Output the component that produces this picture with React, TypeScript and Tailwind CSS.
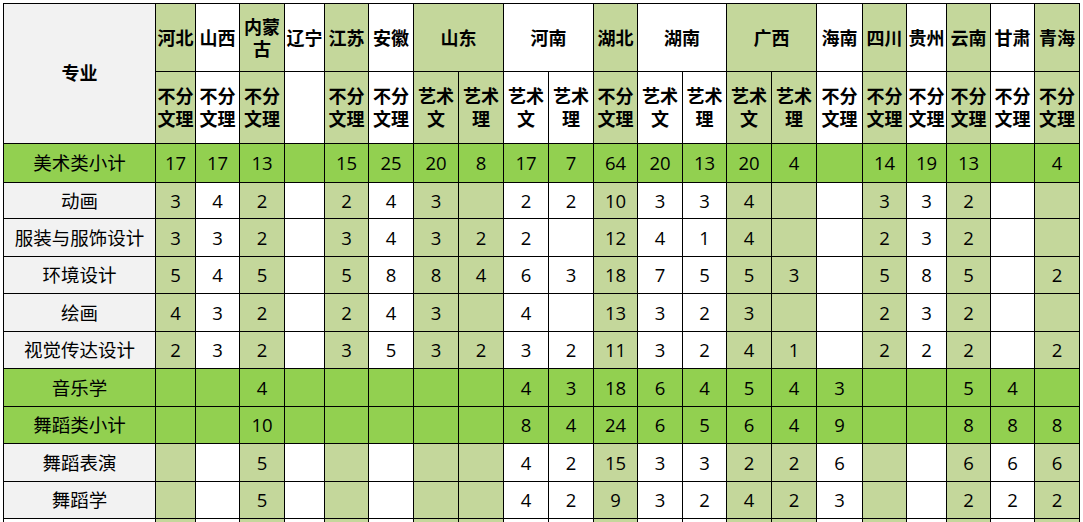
const font = { fontFamily: '"Open Sans", "Noto Sans CJK SC", sans-serif' };

// 每个省份：名称、是否浅绿底色、第二行表头
const provinces = [
  { name: "河北", green: true, subs: ["不分文理"] },
  { name: "山西", green: false, subs: ["不分文理"] },
  { name: "内蒙古", green: true, subs: ["不分文理"] },
  { name: "辽宁", green: false, subs: [""] },
  { name: "江苏", green: true, subs: ["不分文理"] },
  { name: "安徽", green: false, subs: ["不分文理"] },
  { name: "山东", green: true, subs: ["艺术文", "艺术理"] },
  { name: "河南", green: false, subs: ["艺术文", "艺术理"] },
  { name: "湖北", green: true, subs: ["不分文理"] },
  { name: "湖南", green: false, subs: ["艺术文", "艺术理"] },
  { name: "广西", green: true, subs: ["艺术文", "艺术理"] },
  { name: "海南", green: false, subs: ["不分文理"] },
  { name: "四川", green: true, subs: ["不分文理"] },
  { name: "贵州", green: false, subs: ["不分文理"] },
  { name: "云南", green: true, subs: ["不分文理"] },
  { name: "甘肃", green: false, subs: ["不分文理"] },
  { name: "青海", green: true, subs: ["不分文理"] },
];

const widths = [40, 44, 45, 40, 44, 45, 45, 45, 45, 45, 44, 45, 44, 45, 45, 46, 44, 40, 44, 44, 45];
const colGreen = provinces.flatMap((p) => p.subs.map(() => p.green));

const rows: { label: string; total?: boolean; h: number; v: string[] }[] = [
  { label: "美术类小计", total: true, h: 39, v: ["17", "17", "13", "", "15", "25", "20", "8", "17", "7", "64", "20", "13", "20", "4", "", "14", "19", "13", "", "4"] },
  { label: "动画", h: 36, v: ["3", "4", "2", "", "2", "4", "3", "", "2", "2", "10", "3", "3", "4", "", "", "3", "3", "2", "", ""] },
  { label: "服装与服饰设计", h: 38, v: ["3", "3", "2", "", "3", "4", "3", "2", "2", "", "12", "4", "1", "4", "", "", "2", "3", "2", "", ""] },
  { label: "环境设计", h: 37, v: ["5", "4", "5", "", "5", "8", "8", "4", "6", "3", "18", "7", "5", "5", "3", "", "5", "8", "5", "", "2"] },
  { label: "绘画", h: 38, v: ["4", "3", "2", "", "2", "4", "3", "", "4", "", "13", "3", "2", "3", "", "", "2", "3", "2", "", ""] },
  { label: "视觉传达设计", h: 37, v: ["2", "3", "2", "", "3", "5", "3", "2", "3", "2", "11", "3", "2", "4", "1", "", "2", "2", "2", "", "2"] },
  { label: "音乐学", total: true, h: 38, v: ["", "", "4", "", "", "", "", "", "4", "3", "18", "6", "4", "5", "4", "3", "", "", "5", "4", ""] },
  { label: "舞蹈类小计", total: true, h: 37, v: ["", "", "10", "", "", "", "", "", "8", "4", "24", "6", "5", "6", "4", "9", "", "", "8", "8", "8"] },
  { label: "舞蹈表演", h: 38, v: ["", "", "5", "", "", "", "", "", "4", "2", "15", "3", "3", "2", "2", "6", "", "", "6", "6", "6"] },
  { label: "舞蹈学", h: 37, v: ["", "", "5", "", "", "", "", "", "4", "2", "9", "3", "2", "4", "2", "3", "", "", "2", "2", "2"] },
];

function Sub({ text }: { text: string }) {
  if (!text) return null;
  const first = text.slice(0, 2);
  const rest = text.slice(2);
  return (
    <>
      {first}
      <br />
      {rest}
    </>
  );
}

export default function App() {
  return (
    <div className="w-[1083px] h-[522px] overflow-hidden bg-white pl-[3px] pt-[3px]" style={font}>
      <table className="table-fixed border-collapse w-[1077px] text-black">
        <colgroup>
          <col className="w-[152px]" />
          {widths.map((w, i) => (
            <col key={i} style={{ width: w }} />
          ))}
        </colgroup>
        <tbody>
          <tr className="h-[68px]">
            <td rowSpan={2} className="border border-black bg-[#f2f2f2] text-center font-bold text-[18px]">
              专业
            </td>
            {provinces.map((p) => (
              <td
                key={p.name}
                colSpan={p.subs.length}
                className={`border border-black text-center font-bold text-[18px] leading-[22px] px-0 ${p.green ? "bg-[#c4d79b]" : "bg-white"}`}
              >
                {p.name.length > 2 ? (
                  <>
                    {p.name.slice(0, 2)}
                    <br />
                    {p.name.slice(2)}
                  </>
                ) : (
                  p.name
                )}
              </td>
            ))}
          </tr>
          <tr className="h-[72px]">
            {provinces.flatMap((p) =>
              p.subs.map((s, j) => (
                <td
                  key={p.name + j}
                  className={`border border-black text-center font-bold text-[18px] leading-[23px] px-0 ${p.green ? "bg-[#c4d79b]" : "bg-white"}`}
                >
                  <Sub text={s} />
                </td>
              ))
            )}
          </tr>
          {rows.map((r) => (
            <tr key={r.label} style={{ height: r.h }}>
              <td className={`border border-black text-center text-[18.5px] px-0 ${r.total ? "bg-[#92d050]" : "bg-[#f2f2f2]"}`}>
                {r.label}
              </td>
              {r.v.map((v, i) => (
                <td
                  key={i}
                  className={`border border-black text-center text-[18.5px] px-0 ${r.total ? "bg-[#92d050]" : colGreen[i] ? "bg-[#c4d79b]" : "bg-white"}`}
                >
                  {v}
                </td>
              ))}
            </tr>
          ))}
          <tr className="h-[30px]">
            <td className="border border-black bg-white" />
            {colGreen.map((g, i) => (
              <td key={i} className={`border border-black ${g ? "bg-[#c4d79b]" : "bg-white"}`} />
            ))}
          </tr>
        </tbody>
      </table>
    </div>
  );
}
